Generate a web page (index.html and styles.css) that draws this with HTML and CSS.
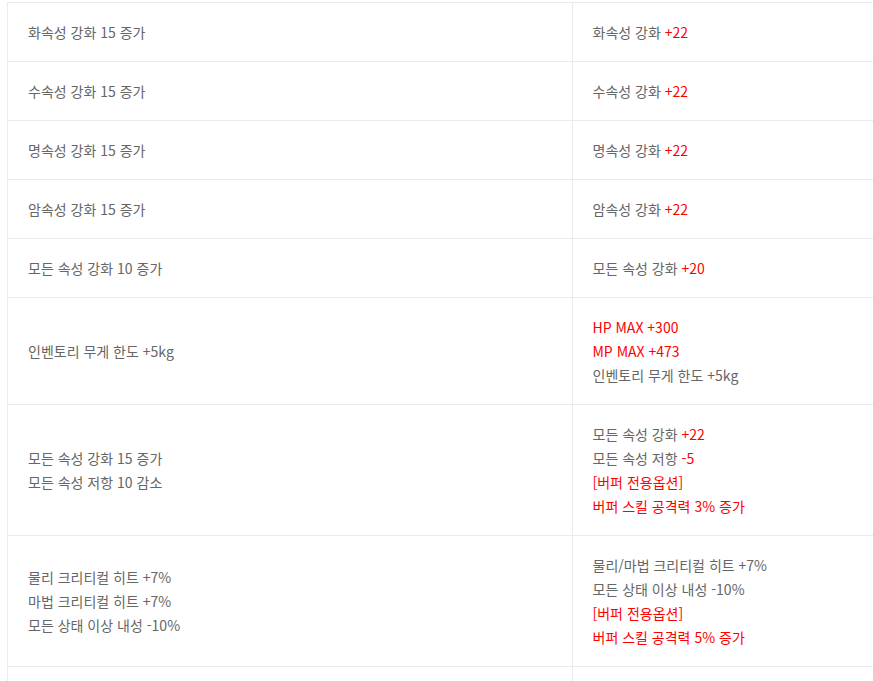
FILE: index.html
```html
<!DOCTYPE html>
<html lang="ko">
<head>
  <meta charset="UTF-8" />
  <title>옵션 비교</title>
  <link rel="stylesheet" href="styles.css">
</head>
<body>

<div class="wrap">
<table class="opt-table">
  <tr>
    <td>화속성 강화 15 증가</td>
    <td>화속성 강화 <span class="red">+22</span></td>
  </tr>
  <tr>
    <td>수속성 강화 15 증가</td>
    <td>수속성 강화 <span class="red">+22</span></td>
  </tr>
  <tr>
    <td>명속성 강화 15 증가</td>
    <td>명속성 강화 <span class="red">+22</span></td>
  </tr>
  <tr>
    <td>암속성 강화 15 증가</td>
    <td>암속성 강화 <span class="red">+22</span></td>
  </tr>
  <tr>
    <td>모든 속성 강화 10 증가</td>
    <td>모든 속성 강화 <span class="red">+20</span></td>
  </tr>
  <tr>
    <td>인벤토리 무게 한도 +5kg</td>
    <td>
      <span class="red">HP MAX +300</span><br>
      <span class="red">MP MAX +473</span><br>
      인벤토리 무게 한도 +5kg
    </td>
  </tr>
  <tr>
    <td>모든 속성 강화 15 증가<br>모든 속성 저항 10 감소</td>
    <td>
      모든 속성 강화 <span class="red">+22</span><br>
      모든 속성 저항 <span class="red">-5</span><br>
      <span class="red">[버퍼 전용옵션]</span><br>
      <span class="red">버퍼 스킬 공격력 3% 증가</span>
    </td>
  </tr>
  <tr>
    <td>물리 크리티컬 히트 +7%<br>마법 크리티컬 히트 +7%<br>모든 상태 이상 내성 -10%</td>
    <td>
      물리/마법 크리티컬 히트 +7%<br>
      모든 상태 이상 내성 -10%<br>
      <span class="red">[버퍼 전용옵션]</span><br>
      <span class="red">버퍼 스킬 공격력 5% 증가</span>
    </td>
  </tr>
  <tr>
    <td>&nbsp;</td>
    <td>&nbsp;</td>
  </tr>
</table>
</div>

</body>
</html>
```

FILE: styles.css
```css
body {
  margin: 2px 0 0 7px;
  font-family: "Noto Sans CJK KR", "Noto Sans", sans-serif;
  background: #fff;
  color: #666;
  overflow: hidden;
}
.wrap {
  width: 1200px;
}
.opt-table {
  width: 1130px;
  border-collapse: collapse;
  table-layout: fixed;
}
.opt-table td {
  width: 50%;
  border: 1px solid #ebebeb;
  padding: 17px 20px;
  font-size: 14px;
  line-height: 24px;
  vertical-align: middle;
}
.red {
  color: #ff0000;
}
```
